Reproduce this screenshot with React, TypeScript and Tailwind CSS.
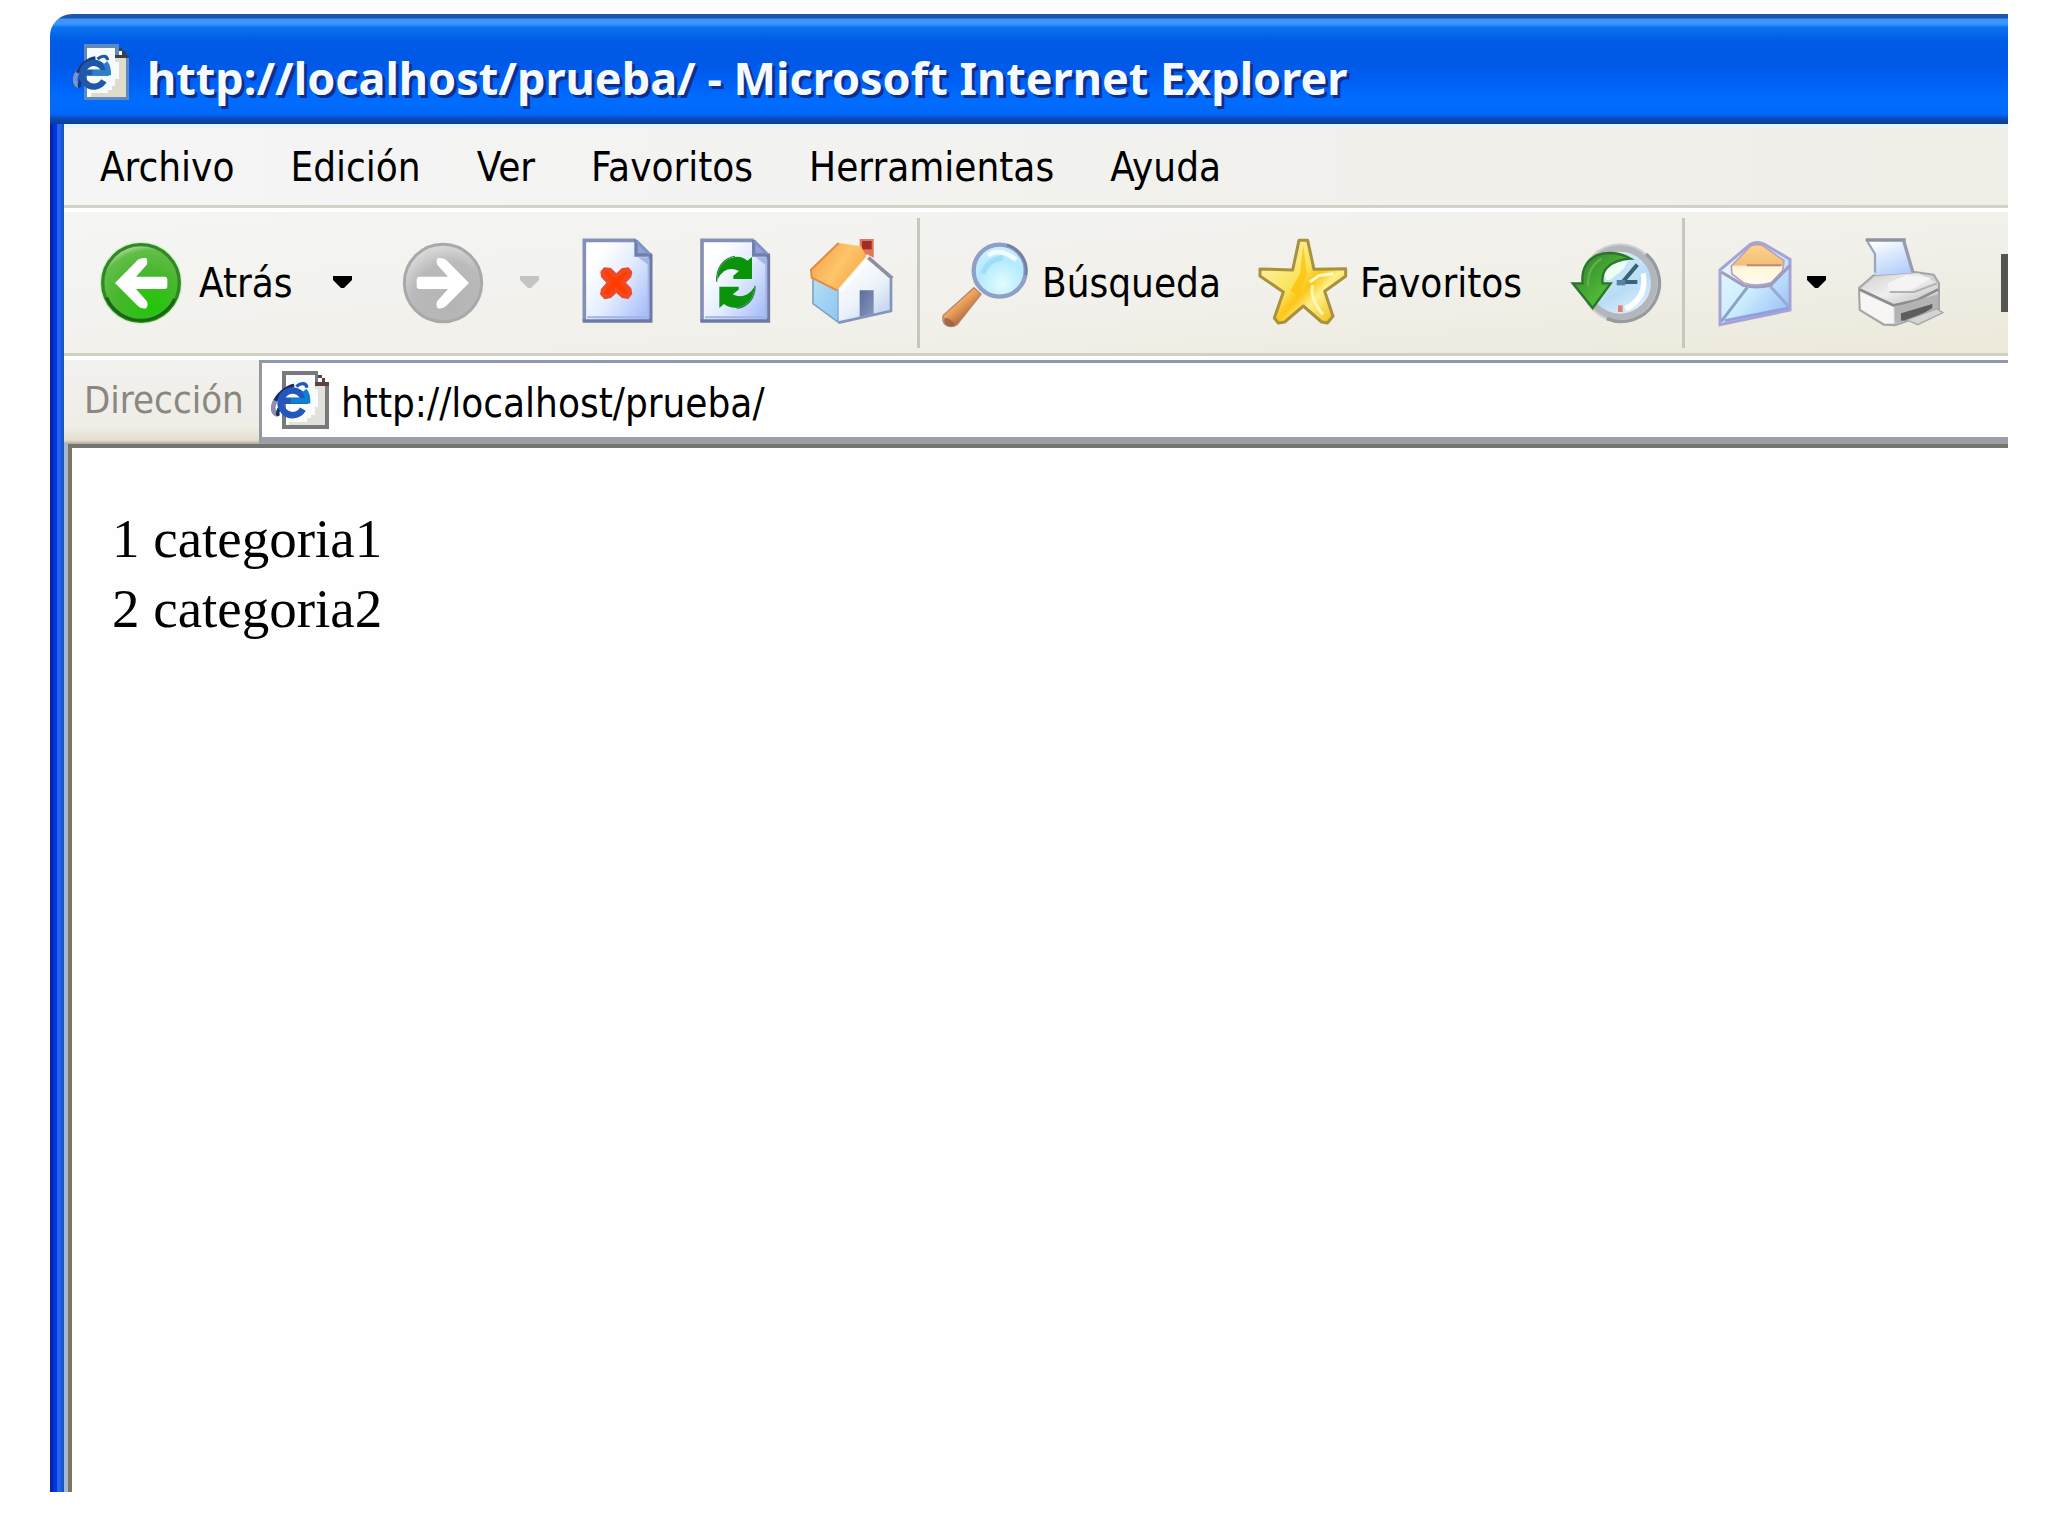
import React from "react";

const PAGE_ROWS = [
  "...GGGGGGGGGG...",
  "...GWWWWWWWWGQ..",
  "...GWWWWWWWWGWQ.",
  "...GWWWWWWWWQQQQ",
  "...GWWWWWWWWLLLG",
  "...GWWWWWWWWWLLG",
  "...GWWWWWWWWWLLG",
  "...GWWWWWWWWWLLG",
  "...GWWWWWWWWWLLG",
  "...GWWWWWWWWWLLG",
  "...GWWWWWWWWLLLG",
  "...GWWWWWWWWLLLG",
  "...GWWWWWWWLLLLG",
  "...GWWWWWWLLLLLG",
  "...GWLLLLLLLLLLG",
  "...GGGGGGGGGGGGG",
];

const ON_WHITE: Record<string, string> = {
  G: "#77797b", W: "#f8fcff", L: "#e3e1dc", Q: "#5d4340", B: "#2457bd",
  C: "#0f7fd0", N: "#1b2a6a", P: "#8e8eb2",
};

const ON_BLUE: Record<string, string> = {
  G: "#5f88bd", W: "#f6fbff", L: "#e0dccd", Q: "#3b4048", B: "#2058a8",
  C: "#2d7fc8", N: "#163884", P: "#7d93c4",
};

function PageIcon({ colors, className }: { colors: Record<string, string>; className: string }) {
  return (
    <svg className={`shrink-0 ${className}`} viewBox="0 0 16 16" aria-hidden="true">
      <g shapeRendering="crispEdges">
        {PAGE_ROWS.flatMap((row, y) =>
          row.split("").map((c, x) =>
            c === "." ? null : <rect key={`${x}-${y}`} x={x} y={y} width="1" height="1" fill={colors[c]} />
          )
        )}
      </g>
      <path d="M1.6 12 C-0.2 11 0.6 8.4 2.6 6.4" fill="none" stroke={colors.P} strokeWidth="1.3" />
      <path d="M1.2 8.2 C2.2 6 4.6 4.2 6.4 4 M2 12.4 C1.6 11.6 2 10.6 2.8 9.6" fill="none" stroke={colors.N} strokeWidth="1" />
      <path d="M3 8.2 H9.2 A3.3 3.4 0 1 0 8.8 10.5" fill="none" stroke={colors.B} strokeWidth="1.8" />
      <path d="M5.5 8.2 H10.1 C10.1 7 9.8 6.1 9.2 5.4" fill="none" stroke={colors.C} strokeWidth="1.5" />
      <path d="M7 4.3 C8.2 3.3 9.7 3.1 9.9 4.6" fill="none" stroke={colors.B} strokeWidth="0.9" />
    </svg>
  );
}

function Icon({ viewBox, children }: { viewBox: string; children: React.ReactNode }) {
  return (
    <svg className="size-[88px] shrink-0 overflow-visible" viewBox={viewBox} aria-hidden="true">
      {children}
    </svg>
  );
}

const ARROW = "M225 218 L288 154 Q298 141 318 143 Q325 150 320 163 L288 199 L374 199 Q382 200 382 208 L382 228 Q382 236 374 236 L288 236 L320 272 Q326 284 319 294 Q304 297 293 286 Z";

function BackIcon() {
  return (
    <Icon viewBox="171 86 264 264">
      <defs>
        <radialGradient id="back" cx="0.62" cy="0.8" r="0.85">
          <stop offset="0" stopColor="#21c708" />
          <stop offset="0.5" stopColor="#47b62d" />
          <stop offset="0.85" stopColor="#62bd48" />
          <stop offset="1" stopColor="#c3e9b4" />
        </radialGradient>
      </defs>
      <circle cx="303" cy="218" r="124" fill="#cdf5bd" />
      <circle cx="303" cy="218" r="115" fill="url(#back)" stroke="#33852a" strokeWidth="10" />
      <path d="M200 262 A112 112 0 0 0 404 266" fill="none" stroke="#1d6416" strokeWidth="9" />
      <path d={ARROW} fill="#fff" />
    </Icon>
  );
}

function ForwardIcon() {
  return (
    <Icon viewBox="171 86 264 264">
      <defs>
        <radialGradient id="fwd" cx="0.6" cy="0.75" r="0.85">
          <stop offset="0" stopColor="#b4b4b4" />
          <stop offset="0.6" stopColor="#bababa" />
          <stop offset="1" stopColor="#e8e8e8" />
        </radialGradient>
      </defs>
      <circle cx="303" cy="218" r="116" fill="url(#fwd)" stroke="#a9a9a9" strokeWidth="9" />
      <path d={ARROW} fill="#fff" transform="matrix(-1 0 0 1 606 0)" />
    </Icon>
  );
}

function SheetShape({ x }: { x: number }) {
  return (
    <g transform={`translate(${x} 0)`}>
      <path d="M5 90 H160 L204 134 V332 H5 Z" fill="url(#sheet)" />
      <path d="M160 90 V134 H204 Z" fill="#8fa3d6" />
      <path d="M166 141 H199 V165 Z" fill="#8ea4e0" opacity="0.7" />
      <path d="M5 332 V90 H160" fill="none" stroke="#8392b4" strokeWidth="11" />
      <path d="M160 88 V134 H208" fill="none" stroke="#6f80ad" strokeWidth="10" />
      <path d="M162 92 L204 134" fill="none" stroke="#7f92c6" strokeWidth="8" />
      <path d="M204 132 V332 H0" fill="none" stroke="#6c7aa6" strokeWidth="11" />
      <path d="M198 145 V321 H14" fill="none" stroke="#a3b3e2" strokeWidth="6" />
    </g>
  );
}

function SheetGradient() {
  return (
    <defs>
      <linearGradient id="sheet" x1="0.2" y1="0.2" x2="1" y2="0.8">
        <stop offset="0" stopColor="#ffffff" />
        <stop offset="0.45" stopColor="#e4edff" />
        <stop offset="1" stopColor="#a9bffa" />
      </linearGradient>
    </defs>
  );
}

function StopIcon() {
  return (
    <Icon viewBox="99 86 264 264">
      <SheetGradient />
      <SheetShape x={128} />
      <path d="M181 184 L192 171 L213 173 L229 189 L246 173 L266 171 L277 184 L274 200 L258 217 L274 234 L277 251 L265 266 L246 263 L229 248 L213 263 L193 267 L180 252 L183 236 L199 217 L183 200 Z" fill="#ef4a26" />
      <path d="M193 183 L204 184 L229 205 L254 184 L264 186 L243 217 L265 248 L254 254 L229 231 L203 254 L193 248 L212 217 Z" fill="#ff3b00" />
    </Icon>
  );
}

function RefreshIcon() {
  return (
    <Icon viewBox="453 86 264 264">
      <SheetShape x={481} />
      <path d="M532 208 C532 172 552 145 585 140 Q606 137 622 151 L636 140 V206 H580 V196 L597 182 Q572 170 552 183 Q540 192 532 208 Z" fill="#0b940b" />
      <path d="M643 230 C642 262 623 287 590 292 Q570 294 552 281 L538 293 V229 H596 V238 L578 252 Q600 264 622 252 Q634 245 643 230 Z" fill="#0b940b" />
      <path d="M530 214 C528 175 550 142 585 138" fill="none" stroke="#2f7f4a" strokeWidth="4" />
      <path d="M645 226 C646 262 624 290 590 294" fill="none" stroke="#2f7f4a" strokeWidth="4" />
    </Icon>
  );
}

function HomeIcon() {
  return (
    <Icon viewBox="798 86 264 264">
      <defs>
        <linearGradient id="roof" x1="0" y1="0.2" x2="1" y2="0.8">
          <stop offset="0" stopColor="#f3a24c" />
          <stop offset="0.5" stopColor="#ffc569" />
          <stop offset="1" stopColor="#f2a13f" />
        </linearGradient>
        <linearGradient id="front" x1="0.2" y1="0" x2="0.9" y2="1">
          <stop offset="0" stopColor="#ffffff" />
          <stop offset="0.5" stopColor="#edf3fb" />
          <stop offset="1" stopColor="#b9cdea" />
        </linearGradient>
        <linearGradient id="side" x1="0" y1="0" x2="1" y2="1">
          <stop offset="0" stopColor="#b5dff5" />
          <stop offset="1" stopColor="#8fc6f1" />
        </linearGradient>
        <linearGradient id="door" x1="0" y1="0" x2="1" y2="1">
          <stop offset="0" stopColor="#5c6d9c" />
          <stop offset="1" stopColor="#8796bd" />
        </linearGradient>
      </defs>
      <path d="M816 200 L892 238 V336 L816 280 Z" fill="url(#side)" stroke="#7fa3c9" strokeWidth="5" />
      <path d="M980 148 L1050 208 V302 L893 337 V236 Z" fill="url(#front)" />
      <path d="M1050 205 V302 L893 337" fill="none" stroke="#8195be" strokeWidth="8" />
      <path d="M956 86 H998 V142 L978 132 L956 142 Z" fill="#e0765a" />
      <path d="M963 92 H992 V117 H963 Z" fill="#9c2f22" />
      <path d="M893 98 L960 108 L976 138 L888 240 L812 202 L810 178 Z" fill="url(#roof)" />
      <path d="M893 98 L810 178 L812 202 L888 240" fill="none" stroke="#df8c45" strokeWidth="6" />
      <path d="M982 142 L1054 204" fill="none" stroke="#8d8f9d" strokeWidth="11" />
      <path d="M980 150 L900 240" fill="none" stroke="#ffffff" strokeWidth="10" />
      <path d="M956 240 H998 V310 L956 319 Z" fill="url(#door)" />
    </Icon>
  );
}

function SearchIcon() {
  return (
    <Icon viewBox="61 86 264 264">
      <defs>
        <radialGradient id="lens" cx="0.55" cy="0.75" r="0.75">
          <stop offset="0" stopColor="#e2fdff" />
          <stop offset="0.6" stopColor="#b4eafe" />
          <stop offset="1" stopColor="#cfeeff" />
        </radialGradient>
        <linearGradient id="handle" x1="0.2" y1="0.2" x2="0.7" y2="0.8">
          <stop offset="0" stopColor="#ffd39a" />
          <stop offset="0.5" stopColor="#e79a55" />
          <stop offset="1" stopColor="#a35e3a" />
        </linearGradient>
      </defs>
      <path d="M163 232 L184 252 L112 343 Q96 354 80 345 Q65 334 71 315 Z" fill="url(#handle)" stroke="#b98468" strokeWidth="4" />
      <path d="M75 322 Q86 322 98 332 L106 343 Q92 351 79 343 Q71 334 75 322 Z" fill="#8d5a4a" opacity="0.7" />
      <circle cx="240" cy="181" r="78" fill="url(#lens)" stroke="#8fa0c6" strokeWidth="13" />
      <path d="M210 132 Q240 112 285 145" fill="none" stroke="#f2fdff" strokeWidth="14" strokeLinecap="round" />
      <path d="M190 190 Q200 150 250 142" fill="none" stroke="#8fd6f4" strokeWidth="16" opacity="0.6" />
      <path d="M262 104 A80 80 0 0 1 318 195" fill="none" stroke="#727f9f" strokeWidth="8" />
    </Icon>
  );
}

function StarIcon() {
  return (
    <Icon viewBox="1014 86 264 264">
      <defs>
        <linearGradient id="star" x1="0.1" y1="0.2" x2="0.9" y2="0.9">
          <stop offset="0" stopColor="#fff3a6" />
          <stop offset="0.4" stopColor="#fbe25a" />
          <stop offset="0.55" stopColor="#fdc518" />
          <stop offset="0.7" stopColor="#fff08a" />
          <stop offset="1" stopColor="#f2c01c" />
        </linearGradient>
      </defs>
      <path d="M1137 90 H1163 L1182 177 L1277 175 V198 L1214 243 L1239 318 L1222 338 L1205 335 L1150 287 L1094 335 L1075 338 L1063 323 L1090 245 L1020 197 V176 L1118 179 Z" fill="url(#star)" stroke="#a8913f" strokeWidth="9" strokeLinejoin="round" />
      <path d="M1150 104 L1160 190 L1135 262 L1112 240 L1140 190 Z" fill="#fdc30d" opacity="0.8" />
      <path d="M1170 215 L1198 195 L1240 190" fill="none" stroke="#fffbd2" strokeWidth="9" />
      <path d="M1178 225 Q1168 260 1208 312" fill="none" stroke="#fff7b4" strokeWidth="9" />
    </Icon>
  );
}

function HistoryIcon() {
  return (
    <Icon viewBox="36 27 264 264">
      <defs>
        <linearGradient id="face" x1="0.2" y1="0" x2="0.8" y2="1">
          <stop offset="0" stopColor="#d7f5f0" />
          <stop offset="0.6" stopColor="#b9dcf7" />
          <stop offset="1" stopColor="#e8f4ff" />
        </linearGradient>
        <linearGradient id="green" x1="0" y1="0" x2="1" y2="1">
          <stop offset="0" stopColor="#2d7f28" />
          <stop offset="0.6" stopColor="#4fb637" />
          <stop offset="1" stopColor="#3fd20f" />
        </linearGradient>
      </defs>
      <circle cx="180" cy="158" r="104" fill="url(#face)" stroke="#b3b6ba" strokeWidth="22" />
      <circle cx="180" cy="158" r="115" fill="none" stroke="#cfd1d3" strokeWidth="6" />
      <path d="M258 72 A115 115 0 0 1 140 266" fill="none" stroke="#969ba0" strokeWidth="10" />
      <path d="M250 130 Q262 205 196 236" fill="none" stroke="#ffffff" strokeWidth="16" />
      <path d="M232 104 L188 156 H232" fill="none" stroke="#3c6277" strokeWidth="12" />
      <path d="M170 150 H196 V166 H170 Z" fill="#5685a4" />
      <path d="M174 226 H188 V246 H174 Z" fill="#e08474" />
      <path d="M130 120 Q142 98 205 92 L190 118 L150 150 L140 150 Z" fill="#ecfff4" />
      <path d="M68 160 Q62 100 110 76 Q160 58 212 86 Q168 88 142 112 Q124 132 128 160 H152 L98 234 L38 160 Z" fill="url(#green)" stroke="#2b762c" strokeWidth="7" />
      <path d="M84 168 Q82 110 125 86" fill="none" stroke="#5fb050" strokeWidth="7" />
    </Icon>
  );
}

function MailIcon() {
  return (
    <Icon viewBox="453 27 264 264">
      <defs>
        <linearGradient id="env" x1="0" y1="0" x2="1" y2="1">
          <stop offset="0" stopColor="#f0faff" />
          <stop offset="0.5" stopColor="#cdeeff" />
          <stop offset="1" stopColor="#92b6f2" />
        </linearGradient>
        <linearGradient id="flap" x1="0" y1="0" x2="0" y2="1">
          <stop offset="0" stopColor="#ffd48a" />
          <stop offset="0.5" stopColor="#f3bd78" />
          <stop offset="0.55" stopColor="#fff6d8" />
          <stop offset="1" stopColor="#fffdf4" />
        </linearGradient>
      </defs>
      <path d="M480 120 L572 42 Q592 33 612 42 L690 88 V240 L480 284 Z" fill="url(#env)" stroke="#a6a4d2" strokeWidth="9" />
      <path d="M514 108 L572 48 Q592 40 610 48 L672 92 L668 122 L634 158 Q590 172 550 158 L516 132 Z" fill="url(#flap)" stroke="#b6a2bd" strokeWidth="5" />
      <path d="M560 106 H664" fill="none" stroke="#b48f7e" strokeWidth="6" />
      <path d="M484 126 L550 166 Q590 176 632 166 L690 106" fill="none" stroke="#9d9dc2" strokeWidth="9" />
      <path d="M562 172 L484 274" fill="none" stroke="#8ba3c4" strokeWidth="9" />
      <path d="M632 170 L688 232" fill="none" stroke="#96abd8" strokeWidth="9" />
      <path d="M494 272 L685 234" fill="none" stroke="#8f9fe0" strokeWidth="8" />
    </Icon>
  );
}

function PrinterIcon() {
  return (
    <Icon viewBox="890 27 264 264">
      <defs>
        <linearGradient id="paper" x1="0.2" y1="0" x2="0.7" y2="1">
          <stop offset="0" stopColor="#ffffff" />
          <stop offset="0.5" stopColor="#d6e6fd" />
          <stop offset="1" stopColor="#b3cdf8" />
        </linearGradient>
        <linearGradient id="lid" x1="0" y1="0" x2="1" y2="1">
          <stop offset="0" stopColor="#cfcfcf" />
          <stop offset="0.5" stopColor="#efefef" />
          <stop offset="1" stopColor="#bdbdbd" />
        </linearGradient>
      </defs>
      <path d="M896 174 L940 136 L1064 126 L1120 134 L1136 160 V240 L1004 286 L970 284 L898 240 Z" fill="#d2d2d2" stroke="#a5a5a5" strokeWidth="6" />
      <path d="M900 186 L1000 232 V280 L972 280 L902 238 Z" fill="#f8f6f4" />
      <path d="M900 178 L945 140 L1075 130 L1132 160 L1125 184 L1006 222 Z" fill="url(#lid)" />
      <path d="M982 160 L1040 134 L1112 144 L1050 182 H985 Z" fill="#f4f4f4" />
      <path d="M988 186 H1062 L1130 160" fill="none" stroke="#b1b1b1" strokeWidth="6" />
      <path d="M898 178 L1000 226 L1066 212 L1134 178" fill="none" stroke="#8b8b8b" strokeWidth="8" />
      <path d="M1002 232 L1134 192 V236 L1004 282 Z" fill="#b3b3b3" />
      <path d="M1022 250 L1116 222 L1116 234 L1056 270 L1022 272 Z" fill="#5d5d5d" />
      <path d="M1040 270 L1130 236 L1148 248 L1072 284 Z" fill="#d4d4d4" stroke="#a8a8a8" strokeWidth="4" />
      <path d="M922 30 H1032 L1060 128 L945 136 V76 Z" fill="url(#paper)" />
      <path d="M916 30 H1036" fill="none" stroke="#8f93a0" strokeWidth="11" />
      <path d="M1030 32 L1058 128" fill="none" stroke="#979db0" strokeWidth="10" />
      <path d="M922 36 L944 72 V128" fill="none" stroke="#9ba6c0" strokeWidth="7" />
    </Icon>
  );
}

function Caret({ className }: { className: string }) {
  return (
    <svg className={`h-[13px] w-5 ${className}`} viewBox="0 0 20 13" aria-hidden="true">
      <path d="M0 0 H19 V4 L11 12 H8 L0 4 Z" fill="currentColor" />
    </svg>
  );
}

function Separator() {
  return <div className="h-[130px] w-[3px] bg-[#c6c8bd]" />;
}

const MENUS = ["Archivo", "Edición", "Ver", "Favoritos", "Herramientas", "Ayuda"];

export default function App() {
  return (
    <div className="flex min-h-screen flex-col bg-[#fefefe] pt-3.5 pr-10 pb-11 pl-[50px] font-['DejaVu_Sans_Condensed','DejaVu_Sans',sans-serif] text-[40px] leading-[52px] text-black">
      <header className="flex h-[110px] items-center gap-[18px] overflow-hidden rounded-tl-[22px] bg-[linear-gradient(to_bottom,#1c57a8_0px,#1c57a8_4px,#3d96ff_5px,#3d96ff_10px,#0b74f2_13px,#005ce6_26px,#0058e6_48px,#0061f6_70px,#006dff_86px,#0068fb_100px,#0b48b4_105px,#0b3c98_110px)] pt-1.5 pl-[23px]">
        <PageIcon colors={ON_BLUE} className="size-14" />
        <h1 className="pt-3 font-['Noto_Sans','Open_Sans',sans-serif] text-[45px] leading-[60px] font-bold whitespace-nowrap text-[#f4faff] [text-shadow:3px_3px_0_#0a2f8c]">
          http://localhost/prueba/ - Microsoft Internet Explorer
        </h1>
      </header>

      <div className="flex flex-1 bg-[linear-gradient(to_right,#0a24a8_0px,#0a24a8_3px,#0036dc_3px,#0036dc_7px,#2264ee_7px,#2264ee_11px,#1a56c8_11px,#1a56c8_14px)] pl-3.5">
        <div className="flex min-w-0 flex-1 flex-col">
          <nav className="border-b-4 border-white bg-[linear-gradient(to_right,#f5f5f6,#efeee7)]">
            <ul className="flex h-[84px] items-center gap-14 border-t-4 border-b-[3px] border-t-[#e2f5ff] border-b-[#d3d2c9] pl-9">
              {MENUS.map((m) => (
                <li key={m}>
                  <button type="button" className="block">{m}</button>
                </li>
              ))}
            </ul>
          </nav>

          <div className="flex h-36 items-center overflow-hidden border-b-[3px] border-[#cfd1c5] bg-[linear-gradient(175deg,#f5f5f4,#f1f0ea_60%,#ece9da)] pl-[33px]">
            <button type="button" className="flex w-[236px] items-center gap-3.5">
              <BackIcon />
              Atrás
            </button>
            <button type="button" aria-label="Historial de atrás"><Caret className="text-black" /></button>
            <button type="button" aria-label="Adelante" className="ml-[46px]"><ForwardIcon /></button>
            <button type="button" aria-label="Historial de adelante" className="ml-[33px]"><Caret className="text-[#c4c4c0]" /></button>
            <button type="button" aria-label="Detener" className="ml-[33px]"><StopIcon /></button>
            <button type="button" aria-label="Actualizar" className="ml-[30px]"><RefreshIcon /></button>
            <button type="button" aria-label="Inicio" className="ml-7"><HomeIcon /></button>
            <div className="ml-[22px]"><Separator /></div>
            <button type="button" className="ml-5 flex w-[318px] items-center gap-3.5">
              <SearchIcon />
              Búsqueda
            </button>
            <button type="button" className="flex w-[314px] items-center gap-3.5">
              <StarIcon />
              Favoritos
            </button>
            <button type="button" aria-label="Historial"><HistoryIcon /></button>
            <div className="ml-[22px]"><Separator /></div>
            <button type="button" aria-label="Correo" className="ml-[26px]"><MailIcon /></button>
            <button type="button" aria-label="Opciones de correo" className="ml-2"><Caret className="text-black" /></button>
            <button type="button" aria-label="Imprimir" className="ml-[30px]"><PrinterIcon /></button>
            <div className="ml-auto h-[58px] w-[7px] bg-[#55544f]" />
          </div>

          <div className="flex h-[88px] border-t-4 border-white bg-[linear-gradient(to_bottom,#f2f1ee_0px,#efede6_66px,#e4dfd0_80px,#aeaaa0_84px)]">
            <label htmlFor="address" className="w-[195px] shrink-0 pt-3.5 pl-5 text-[38px] text-[#8a8780]">Dirección</label>
            <div className="flex flex-1 items-center gap-3 border-t-[3px] border-b-[7px] border-l-[3px] border-t-[#8e9ab0] border-b-[#9d9fa7] border-l-[#93999f] bg-white pl-[9px]">
              <PageIcon colors={ON_WHITE} className="size-[58px]" />
              <input
                id="address"
                type="text"
                defaultValue="http://localhost/prueba/"
                className="min-w-0 flex-1 bg-transparent pt-1.5 outline-none"
              />
            </div>
          </div>

          <main className="flex-1 border-l-4 border-[#a5b9cc]">
            <div className="h-full border-t-4 border-l-4 border-t-[#73756f] border-l-[#7c7566] bg-[#fefefe] pt-14 pl-10 font-['Liberation_Serif',serif] text-[55px] leading-[70px]">
              <p>1 categoria1</p>
              <p>2 categoria2</p>
            </div>
          </main>
        </div>
      </div>
    </div>
  );
}
